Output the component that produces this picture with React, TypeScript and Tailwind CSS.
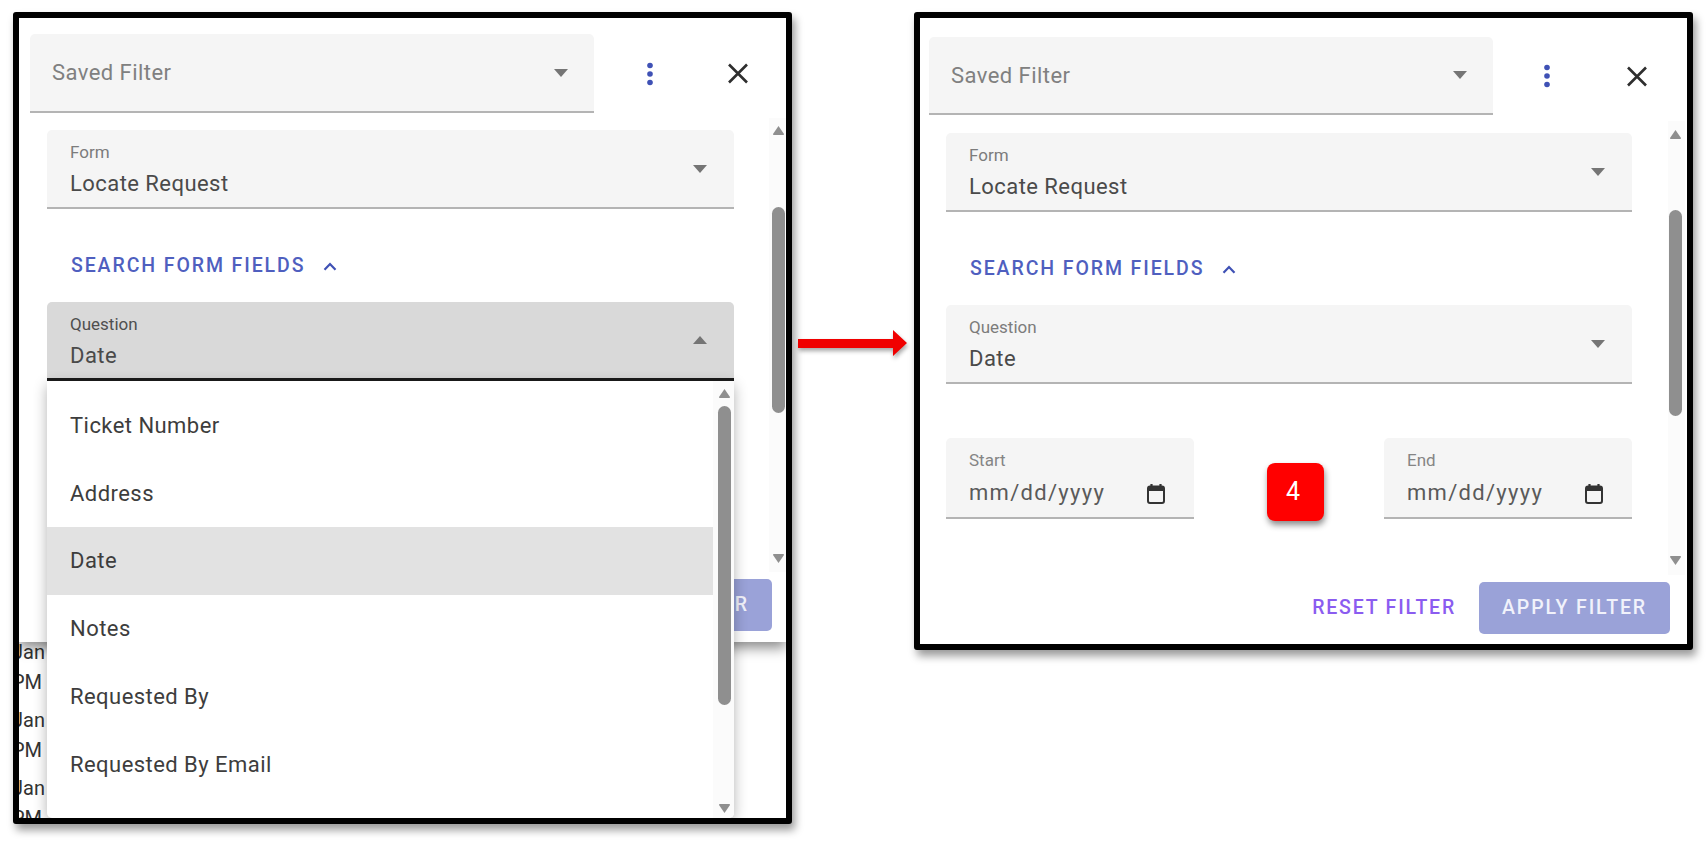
import React from "react";

function Caret({ up = false }: { up?: boolean }) {
  return (
    <svg width="14" height="8" viewBox="0 0 14 8" className="shrink-0">
      <path d={up ? "M0 8 L7 0 L14 8 Z" : "M0 0 L14 0 L7 8 Z"} fill="#757575" />
    </svg>
  );
}

function ScrollArrow({ up = false }: { up?: boolean }) {
  return (
    <svg width="13" height="10" viewBox="0 0 13 10" className="block shrink-0">
      <path
        d={up ? "M6.5 1 L12 9 Q12.3 10 11 10 L2 10 Q0.7 10 1 9 Z" : "M6.5 9 L12 1 Q12.3 0 11 0 L2 0 Q0.7 0 1 1 Z"}
        fill="#8f8f8f"
      />
    </svg>
  );
}

function Kebab() {
  return (
    <svg width="8" height="24" viewBox="0 0 8 24" className="shrink-0">
      <circle cx="4" cy="3.5" r="2.8" fill="#3f51b5" />
      <circle cx="4" cy="12" r="2.8" fill="#3f51b5" />
      <circle cx="4" cy="20.5" r="2.8" fill="#3f51b5" />
    </svg>
  );
}

function CloseX() {
  return (
    <svg width="22" height="21" viewBox="0 0 22 21" className="shrink-0">
      <path d="M2 1.5 L20 19.5 M20 1.5 L2 19.5" stroke="#2e2e2e" strokeWidth="2.6" fill="none" />
    </svg>
  );
}

function Chevron() {
  return (
    <svg width="14" height="9" viewBox="0 0 14 9" className="shrink-0">
      <path d="M1.5 7.8 L7 2 L12.5 7.8" stroke="#3f51b5" strokeWidth="2.2" fill="none" />
    </svg>
  );
}

function Calendar() {
  return (
    <svg width="18" height="20" viewBox="0 0 18 20" className="shrink-0 mt-[2px]">
      <path d="M4.5 0 V3 M13.5 0 V3" stroke="#333" strokeWidth="2.2" />
      <rect x="1" y="2.5" width="16" height="16.5" rx="2" fill="none" stroke="#333" strokeWidth="2" />
      <rect x="1" y="2.5" width="16" height="4.5" fill="#333" />
    </svg>
  );
}

function Field({ label, value, active = false }: { label: string; value: string; active?: boolean }) {
  return (
    <div
      className={
        active
          ? "box-border h-[79px] flex items-center justify-between pl-[23px] pr-[27px] rounded-t-[5px] bg-[#d9d9d9] border-b-[3px] border-[#1c1c1c]"
          : "box-border h-[79px] flex items-center justify-between pl-[23px] pr-[27px] rounded-t-[5px] bg-[#f5f5f5] border-b-2 border-[#b4b4b4]"
      }
    >
      <div className="flex flex-col pt-[3px]">
        <span className={active ? "text-[17px] leading-[20px] text-[#4f4f4f]" : "text-[17px] leading-[20px] text-[#7c7c7c]"}>{label}</span>
        <span className="mt-[8px] text-[22px] leading-[28px] tracking-[0.45px] text-[#4a4a4a]">{value}</span>
      </div>
      <Caret up={active} />
    </div>
  );
}

function SavedFilter({ narrow = false }: { narrow?: boolean }) {
  return (
    <div
      className={
        narrow
          ? "box-border w-[564px] h-[78px] flex items-center justify-between pl-[22px] pr-[26px] rounded-t-[5px] bg-[#f5f5f5] border-b-2 border-[#b4b4b4]"
          : "box-border w-[564px] h-[79px] flex items-center justify-between pl-[22px] pr-[26px] rounded-t-[5px] bg-[#f5f5f5] border-b-2 border-[#b4b4b4]"
      }
    >
      <span className={narrow ? "pt-[1px] text-[22px] leading-[28px] tracking-[0.45px] text-[#808080]" : "text-[22px] leading-[28px] tracking-[0.45px] text-[#808080]"}>Saved Filter</span>
      <Caret />
    </div>
  );
}

function SearchRow() {
  return (
    <div className="h-[40px] mt-[37px] mb-[16px] pl-[24px] flex items-center gap-[18px]">
      <span className="text-[19.5px] leading-[24px] font-medium tracking-[1.9px] text-[#4f5fbf]">SEARCH FORM FIELDS</span>
      <Chevron />
    </div>
  );
}

function DateField({ label }: { label: string }) {
  return (
    <div className="box-border w-[248px] h-[81px] flex flex-col pl-[23px] pr-[29px] pt-[12px] rounded-t-[5px] bg-[#f5f5f5] border-b-2 border-[#b4b4b4]">
      <span className="text-[17px] leading-[20px] text-[#858585]">{label}</span>
      <div className="mt-[9px] flex items-center justify-between">
        <span className="text-[22px] leading-[28px] tracking-[1.3px] text-[#5a5a5a]">mm/dd/yyyy</span>
        <Calendar />
      </div>
    </div>
  );
}

function Footer() {
  return (
    <div className="flex items-center justify-end gap-[23px]">
      <span className="text-[19.5px] leading-[24px] font-medium tracking-[1.8px] text-[#8b5cf0]">RESET FILTER</span>
      <div className="w-[191px] h-[52px] flex items-center justify-center rounded-[5px] bg-[#9aa2d8] text-[19.5px] leading-[24px] font-medium tracking-[1.9px] text-[#f1f2fb]">
        APPLY FILTER
      </div>
    </div>
  );
}

const menuItems = ["Ticket Number", "Address", "Date", "Notes", "Requested By", "Requested By Email"];

function Menu() {
  return (
    <div className="absolute left-[28px] top-[363px] bottom-0 w-[687px] z-20 flex rounded-b-[5px] bg-white shadow-[0_4px_14px_rgba(0,0,0,0.3)] overflow-hidden">
      <div className="w-[666px] pt-[11px] flex flex-col">
        {menuItems.map((item) => (
          <div
            key={item}
            className={
              item === "Date"
                ? "h-[68px] shrink-0 pl-[23px] pb-[1px] flex items-center bg-[#e2e2e2] text-[22px] tracking-[0.45px] text-[#3d3d3d]"
                : "h-[67.6px] shrink-0 pl-[23px] flex items-center text-[22px] tracking-[0.45px] text-[#3d3d3d]"
            }
          >
            {item}
          </div>
        ))}
      </div>
      <div className="w-[21px] pl-[5px] pt-[7px] bg-[#fbfbfb] flex flex-col">
        <ScrollArrow up />
        <div className="w-[13px] h-[299px] mt-[8px] rounded-full bg-[#8f8f8f]" />
        <div className="mt-[99px]">
          <ScrollArrow />
        </div>
      </div>
    </div>
  );
}

function LeftFrame() {
  return (
    <div className="relative box-border w-[779px] h-[812px] shrink-0 flex flex-col overflow-hidden rounded-[3px] border-[6px] border-black bg-white shadow-[3px_6px_8px_rgba(0,0,0,0.4)]">
      <div className="relative z-10 h-[624px] shrink-0 flex flex-col bg-white shadow-[0_6px_12px_rgba(0,0,0,0.45)]">
        <div className="flex items-center pt-[16px] pl-[11px]">
          <SavedFilter />
          <div className="ml-[52px]">
            <Kebab />
          </div>
          <div className="ml-[73px]">
            <CloseX />
          </div>
        </div>
        <div className="mt-[5px] h-[454px] flex">
          <div className="w-[687px] ml-[28px] pt-[12px]">
            <Field label="Form" value="Locate Request" />
            <SearchRow />
            <Field label="Question" value="Date" active />
          </div>
          <div className="ml-[35px] w-[17px] pl-[3px] pt-[7px] bg-[#fbfbfb] flex flex-col">
            <ScrollArrow up />
            <div className="w-[13px] h-[206px] mt-[72px] rounded-full bg-[#8f8f8f]" />
            <div className="mt-[141px]">
              <ScrollArrow />
            </div>
          </div>
        </div>
        <div className="pt-[7px] pr-[14px]">
          <Footer />
        </div>
      </div>
      <div className="-ml-[7px] -mt-[5px] flex flex-col text-[20px] text-[#333]">
        {[0, 1, 2].map((i) => (
          <div key={i} className="mb-[8px]">
            <div className="h-[30px] leading-[30px]">Jan</div>
            <div className="h-[30px] leading-[30px]">PM</div>
          </div>
        ))}
      </div>
      <Menu />
    </div>
  );
}

function RightFrame() {
  return (
    <div className="relative box-border w-[779px] h-[638px] shrink-0 flex flex-col overflow-hidden rounded-[3px] border-[6px] border-black bg-white shadow-[3px_6px_8px_rgba(0,0,0,0.4)]">
      <div className="flex items-center pt-[19px] pl-[9px]">
        <SavedFilter narrow />
        <div className="ml-[50px]">
          <Kebab />
        </div>
        <div className="ml-[75px]">
          <CloseX />
        </div>
      </div>
      <div className="mt-[6px] h-[454px] flex">
        <div className="w-[686px] ml-[26px] pt-[12px]">
          <Field label="Form" value="Locate Request" />
          <SearchRow />
          <Field label="Question" value="Date" />
          <div className="mt-[54px] flex justify-between">
            <DateField label="Start" />
            <DateField label="End" />
          </div>
        </div>
        <div className="ml-[36px] w-[17px] pl-[1px] pt-[8px] bg-[#fbfbfb] flex flex-col">
          <ScrollArrow up />
          <div className="w-[13px] h-[206px] mt-[71px] rounded-full bg-[#8f8f8f]" />
          <div className="mt-[140px]">
            <ScrollArrow />
          </div>
        </div>
      </div>
      <div className="pt-[7px] pr-[17px]">
        <Footer />
      </div>
      <div className="absolute left-[347px] top-[445px] w-[57px] h-[58px] pr-[5px] flex items-center justify-center rounded-[8px] bg-[#ff0000] text-[25px] text-white shadow-[1px_4px_6px_rgba(0,0,0,0.45)]">
        4
      </div>
    </div>
  );
}

function RedArrow() {
  return (
    <svg width="109" height="27" viewBox="0 0 109 27" className="shrink-0 mt-[318px] ml-[6px] mr-[7px] drop-shadow-[1px_3px_2px_rgba(0,0,0,0.35)]">
      <path d="M0 9 H95 V0 L109 13 L95 26 V18 H0 Z" fill="#f00000" />
    </svg>
  );
}

export default function App() {
  return (
    <div className="w-full h-[845px] overflow-hidden bg-white flex items-start pl-[13px] pt-[12px] font-['Roboto',sans-serif]">
      <LeftFrame />
      <RedArrow />
      <RightFrame />
    </div>
  );
}
